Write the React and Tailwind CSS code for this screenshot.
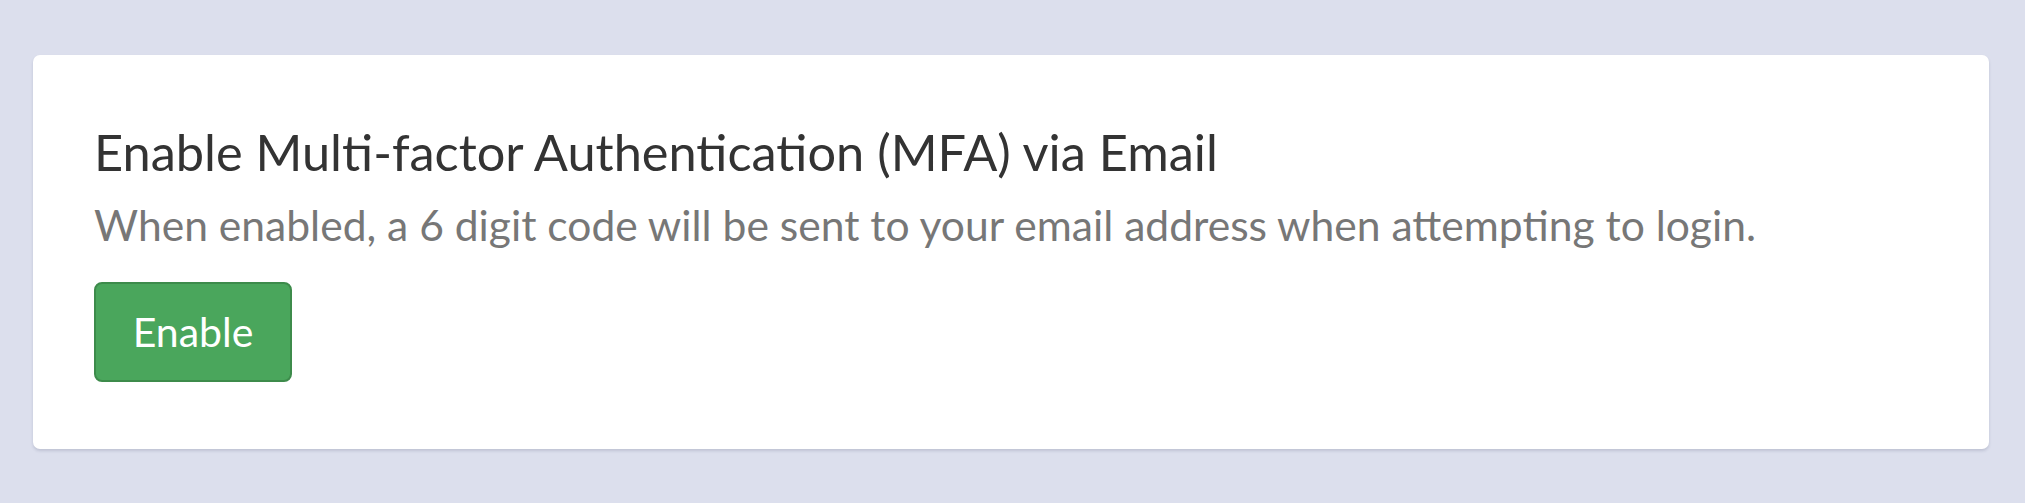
export default function App() {
  return (
    <div className="min-h-screen bg-[#dcdfed] pl-[33px] pr-[36px] pt-[55px] pb-[54px] font-['Lato',sans-serif]">
      {/* MFA card */}
      <div className="bg-white rounded-[7px] shadow-[0_2px_3px_rgba(60,64,100,0.18)] pl-[61px] pr-[61px] pt-[67px] pb-[67px]">
        <h2 className="text-[50.5px] leading-[60px] text-[#333333] font-normal">
          Enable Multi-factor Authentication (MFA) via Email
        </h2>
        <p className="mt-[17px] text-[42.6px] leading-[51px] text-[#777777]">
          When enabled, a 6 digit code will be sent to your email address when attempting to login.
        </p>
        <button className="mt-[32px] flex items-center justify-center w-[198px] h-[100px] rounded-[8px] border-2 border-[#3d8b4b] bg-[#4aa65c] text-white text-[41px]">
          Enable
        </button>
      </div>
    </div>
  );
}
